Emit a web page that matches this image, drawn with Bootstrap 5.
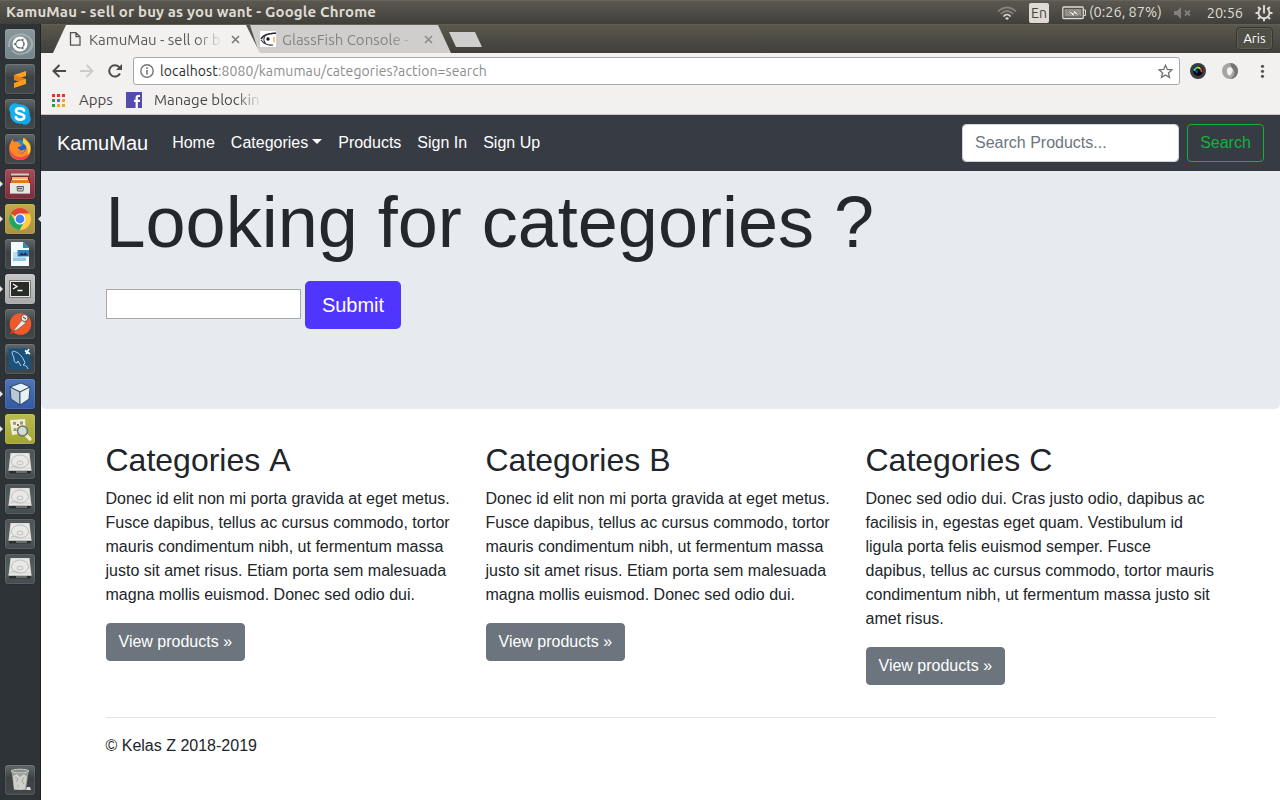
<!DOCTYPE html>
<html lang="en">
<head>
<meta charset="utf-8">
<meta name="viewport" content="width=device-width, initial-scale=1">
<title>KamuMau - sell or buy as you want</title>
<link rel="stylesheet" href="https://cdn.jsdelivr.net/npm/bootstrap@5.3.0/dist/css/bootstrap.min.css">
<style>
body{font-family:"Liberation Sans",Arial,sans-serif;color:#212529;background:#fff}
svg{display:block;flex:none}
.desktop{height:800px;width:1280px}
.ui{font-family:Ubuntu,"Noto Sans",sans-serif;white-space:nowrap}
.panel{height:24px;background:linear-gradient(#5b5850,#403f3a);border-top:1px solid #65635a;color:#dfdbd2;font-size:14.5px;line-height:22px;padding:0 7px 0 6px}
.panel .title{font-weight:700;font-size:15px;letter-spacing:.16px;margin-top:-2px}
.panel .reading{margin-top:-2px}
.lang{width:20px;height:20px;background:#dfdbd2;color:#45433e;font-size:14px;line-height:20px;border-radius:2px;text-align:center;margin:0 13px 0 12px}
.launcher{width:41px;background:#2d3336;border-right:1px solid #212425;padding:5px 0 5px 5px;gap:5px}
.tile{width:30px;height:30px;border-radius:3px;background:linear-gradient(#60676a,#3c4244 45%,#41474a);box-shadow:inset 0 0 0 1px #ffffff1c,0 0 1px #111}
.tile.running::before{content:"";position:absolute;left:-5px;top:12px;border:3px solid transparent;border-left-color:#e6e6e6;border-right:0}
.tile.focused::after{content:"";position:absolute;right:-6px;top:12px;border:3px solid transparent;border-right-color:#e6e6e6;border-left:0}
.t-dash{background:linear-gradient(#8a969a,#76858a)}
.t-files{background:linear-gradient(#a34c5a,#7c2c3a)}
.t-chrome{background:linear-gradient(#c1a94b,#a89143)}
.t-term{background:linear-gradient(#c5c5c5,#aaa)}
.t-cube{background:linear-gradient(#4f75b8,#3259a2)}
.t-view{background:linear-gradient(#b9bb4f,#a2a630)}
.t-disk{background:linear-gradient(#4d5456,#565d60 60%,#434a4d)}
.strip{height:29px;background:linear-gradient(#5a584e,#403f3a);border-top:1px solid #626054;padding-left:12px}
.tab{height:28px;font-size:15px;line-height:27px;color:#5a5858}
.tab-on{width:207px;background:#f2f1f0;clip-path:polygon(0 100%,13px 0,193px 0,100% 100%);padding-left:16px;z-index:1}
.tab-off{width:201px;margin-left:-10px;background:#d0cecc;color:#858382;clip-path:polygon(0 0,188px 0,100% 100%,9px 100%);padding-left:10px}
.fade-r{-webkit-mask-image:linear-gradient(90deg,#000 calc(100% - 28px),transparent);mask-image:linear-gradient(90deg,#000 calc(100% - 28px),transparent)}
.newtab{width:33px;height:15px;background:#d0cecc;clip-path:polygon(0 0,26px 0,100% 100%,7px 100%);margin:7px 0 0 -2px}
.who{margin:2px 7px 0 0;width:37px;height:23px;border:1px solid #37362f;border-radius:4px;background:#504f47;color:#fff;font-size:13px;line-height:21px;text-align:center;box-shadow:inset 0 0 0 1px #5f5e56}
.tools{height:35px;background:#f2f1f0;padding:4px 11px 3px 11px}
.omni{width:1047px;height:28px;border:1px solid #aaa8a6;border-radius:3px;background:#fff;color:#8d8d8d;font-size:14px;letter-spacing:.1px;line-height:25px;padding:0 6px 0 6px}
.marks{height:27px;background:#f2f1f0;border-bottom:1px solid #c8c6c4;color:#4a4848;font-size:15px;line-height:22px;padding:0 0 2px 11px}
.site{height:56px;background:#373b43;padding:0 16px}
.site .navbar-brand{color:#fff;font-size:20px;margin-right:16px}
.site .nav-link{color:#fff;padding:8px}
.site .dropdown-toggle::after{margin-left:4px;border-width:5px 5px 0}
.site .form-control{width:217px;height:38px;border-radius:4px;border-color:#ced4da}
.site .form-control::placeholder{color:#6c757d}
.site .btn{--bs-btn-color:#12b23e;--bs-btn-border-color:#12b23e;border-radius:4px;width:77px;padding:6px 0}
.hero{height:238px;background:#e7eaef;border-radius:0 0 5px 5px;padding-top:8px}
.container,.row{--bs-gutter-x:30px}
.hero h1{font-size:72px;line-height:86.4px;font-weight:300;color:#24272c;margin-bottom:15.6px}
.query{width:195px;height:30px;border:1px solid #a9a9a9;background:#fff;margin-bottom:2px}
.send{background:#5035ff;color:#fff;width:96px;height:48px;font-size:20px;border-radius:5px;padding:0 0 0 1px}
.topic h2{font-size:32px;font-weight:500;line-height:38.4px;font-kerning:none}
.topic .btn{border-radius:4px;background:#6c757d;border-color:#6c757d}
.rule{border-top:1px solid #e3e3e4;opacity:1;color:inherit}
</style>
</head>
<body>
<div class="desktop d-flex flex-column overflow-hidden">
<header class="panel ui d-flex align-items-center">
  <span class="title">KamuMau - sell or buy as you want - Google Chrome</span>
  <div class="ms-auto d-flex align-items-center">
    <svg width="20" height="16" viewBox="0 0 20 16" fill="none" stroke-width="1.7"><path d="M1 6.5Q10-1.5 19 6.5M3.7 9Q10 3 16.300 9" stroke="#85827a"/><path d="M6.400 11.500Q10 7.500 13.600 11.500" stroke="#dfdbd2"/><path d="M8 13.200Q10 11.500 12 13.200L10 15z" fill="#dfdbd2"/></svg>
    <span class="lang">En</span>
    <svg width="24" height="14" viewBox="0 0 24 14"><rect x=".8" y="1" width="20.500" height="11.500" rx="1" fill="none" stroke="#dfdbd2" stroke-width="1.300"/><path d="M22 4h1.500v5.500H22" fill="none" stroke="#dfdbd2"/><path d="M2.500 3h17v7.500h-17z" fill="#96938b"/><path d="M5 4l6.500 3V3.500L18 10l-6-2.500V11z" fill="#f2eee6" stroke="#55534c" stroke-width=".5"/></svg>
    <span class="reading" style="margin-left:3px">(0:26, 87%)</span>
    <svg style="margin-left:12px" width="18" height="14" viewBox="0 0 18 14"><path d="M0 5h3l4-4v12L3 9H0z" fill="#84817a"/><path d="M11 4.500l5 5m0-5l-5 5" stroke="#84817a" stroke-width="1.800"/></svg>
    <span class="reading" style="margin:0 12px 0 15px">20:56</span>
    <svg width="18" height="18" viewBox="0 0 18 18" fill="none" stroke="#dfdbd2"><path d="M6 4.200a5.500 5.500 0 1 0 6 0" stroke-width="1.900"/><path d="M9 1v8.500" stroke-width="1.900"/><path d="M9 14.500V17.300M14.500 9H17.500M.5 9h3M13 13l2 2M5 13l-2 2M13 5l2-2M5 5L3 3" stroke-width="2.100"/></svg>
  </div>
</header>
<div class="d-flex flex-grow-1" style="min-height:0">
<aside class="launcher d-flex flex-column flex-shrink-0">
  <div class="tile t-dash"><svg width="30" height="30" viewBox="0 0 30 30" fill="none"><path d="M4 18C3 7 15 3 22 7s7 13-1 17" stroke="#a3afb3" stroke-width="2"/><path d="M7 21c6 8 18 3 19-5" stroke="#9ba8ac" stroke-width="2"/><circle cx="15" cy="15" r="7.500" fill="#fff"/><circle cx="15" cy="15" r="4" stroke="#56646a" stroke-width="1.400"/><g fill="#56646a" stroke="#fff" stroke-width=".7"><circle cx="10.300" cy="15" r="1.600"/><circle cx="17.400" cy="11" r="1.600"/><circle cx="17.400" cy="19" r="1.600"/></g></svg></div>
  <div class="tile"><svg width="30" height="30" viewBox="0 0 30 30"><path d="M9 11l12-4v5L9 16z" fill="#ffa126"/><path d="M9 11l12 4v5L9 16z" fill="#e87e12"/><path d="M9 19l12-4v5L9 24z" fill="#ff9c1e"/></svg></div>
  <div class="tile"><svg width="30" height="30" viewBox="0 0 30 30"><circle cx="15" cy="15" r="9.800" fill="#12b0ef"/><circle cx="10" cy="10" r="5.800" fill="#12b0ef"/><circle cx="20" cy="20" r="5.800" fill="#12a7e8"/><path d="M19 11.500C17.500 8.500 11 8.800 11 12c0 3.800 8.300 2 8.300 5.800 0 3.600-7 3.700-8.500.4" fill="none" stroke="#fff" stroke-width="2.700" stroke-linecap="round"/></svg></div>
  <div class="tile"><svg width="30" height="30" viewBox="0 0 30 30"><circle cx="15" cy="15.500" r="9.500" fill="#2b5ec4"/><path d="M12 8c3-4 8-1 10 3-3-1-5 0-6 1z" fill="#1c8bdf"/><path d="M4.500 11l3-6 1.500 3c2-1 4 0 6 1-1 1 0 2 2 2-1 2-4 1-4 3 1 3 5 3 7 1 0 4-5 5-8 3 5 4 11-1 9-8l-3-5 2-1 5 6c3 8-2 16-10 16S3 20 4.500 11z" fill="#ff8a22"/><path d="M4.500 11c0 6 3.500 12 10.500 12 5 0 8-2 10-5-1 6-5 8-10 8S3 21 4.500 11z" fill="#fb3f52"/><path d="M18 4l5 4c3 4 3 10 0 13 0-6-1-9-5-12z" fill="#ffd43c"/></svg></div>
  <div class="tile t-files running position-relative"><svg width="30" height="30" viewBox="0 0 30 30"><path d="M6 5h18l1 10H5z" fill="#6c3028"/><path d="M6 4.500h18v2H6z" fill="#d4cbc4"/><path d="M7 8h16v3H7z" fill="#ffb05d"/><path d="M6 11h18v4H6z" fill="#e77527"/><path d="M8 10l14 .1v1H8z" fill="#fff0d7"/><path d="M5 14h20v11H5z" fill="#e6e6e3"/><path d="M5 24h20v1H5z" fill="#aaa"/><path d="M12 17.500h6.500l-.5 4.500h-5.500z" fill="#e4e4e1" stroke="#595959"/><path d="M13 19.500h4" stroke="#555" stroke-width="1.500"/></svg></div>
  <div class="tile t-chrome running focused position-relative"><svg width="30" height="30" viewBox="0 0 30 30"><circle cx="15" cy="15" r="11" fill="#ffce44"/><path d="M15 15L5.500 9.500A11 11 0 0 1 24.500 9.500H15z" fill="#e24436"/><path d="M5.500 9.500A11 11 0 0 0 14.500 26L19.500 17.500 15 15 10.500 17.500z" fill="#21a464"/><circle cx="15" cy="15" r="5.500" fill="#fff"/><circle cx="15" cy="15" r="4.400" fill="#3e83ed"/></svg></div>
  <div class="tile"><svg width="30" height="30" viewBox="0 0 30 30"><path d="M6 3h12l6 6v18H6z" fill="#f4f9fb"/><path d="M18 3l6 6h-6z" fill="#258bc2"/><path d="M8 13h9v5H8z" fill="#bcdff0"/><path d="M8 18.500h13v3.500H8z" fill="#8fcbe8"/><path d="M12.500 11H24v6.500H12.500z" fill="#2f85bd"/><path d="M13.500 16.500l3-3 2 1.500 2-2 2.500 3.500z" fill="#143a54"/></svg></div>
  <div class="tile t-term running position-relative"><svg width="30" height="30" viewBox="0 0 30 30"><path d="M4.500 6.500h21v17h-21z" fill="#e7e7e4" stroke="#777"/><path d="M6 8h18v14H6z" fill="#292d2a"/><path d="M8 10l4 2.500L8 15M12.500 16.500h5" fill="none" stroke="#fff" stroke-width="1.300"/></svg></div>
  <div class="tile"><svg width="30" height="30" viewBox="0 0 30 30"><circle cx="15.500" cy="15" r="10.800" fill="#f0592c"/><path d="M5 25l2-5 3 4z" fill="#d83b14"/><path d="M8 22L17 11l4 3-9 7z" fill="#eee6df" stroke="#8b5d4a" stroke-width=".8"/><circle cx="19.500" cy="9" r="3.500" fill="#e8e7e3" stroke="#534742" stroke-width=".8"/><path d="M18 8l3 2" stroke="#333"/></svg></div>
  <div class="tile"><svg width="30" height="30" viewBox="0 0 30 30"><path d="M3.500 4.500h22v21h-22z" fill="#18527d"/><path d="M23 25c-1-3-3-4-5-4l2-2c-2-6-6-10-9-11-2-1-3-1-4 0 0 3 2 4 2 7 0 2 1 4 3 4l1-2 3 5" fill="none" stroke="#cbdde7" stroke-width=".9"/><path d="M20 6.500l5 3.500M24 5l-3 5" fill="none" stroke="#fff" stroke-width="1.600"/></svg></div>
  <div class="tile t-cube running position-relative"><svg width="30" height="30" viewBox="0 0 30 30" stroke="#1d3154" stroke-width=".8" stroke-linejoin="round"><path d="M5 8l11-4 9 4-10 5z" fill="#e4f3f8"/><path d="M5 8l10 5v13L6 20z" fill="#b7c9d5"/><path d="M25 8l-10 5v13l9-6z" fill="#e6f1f6"/></svg></div>
  <div class="tile t-view running position-relative"><svg width="30" height="30" viewBox="0 0 30 30"><path d="M5 6l15-1 1 14-14 2z" fill="#eeeedd"/><path d="M8 8l3-.3v3H8zm7-.5h3v3h-3zm-6.500 7l3-.5v3h-3z" fill="#8fa06b"/><path d="M12 10h2v2h-2z" fill="#c85b28"/><path d="M21 21l4 4" stroke="#edece1" stroke-width="3.200" stroke-linecap="round"/><circle cx="17.500" cy="17" r="5" fill="#cfd9cf" fill-opacity=".9" stroke="#6a726a" stroke-width="1.500"/></svg></div>
  <div class="tile t-disk"><svg width="30" height="30" viewBox="0 0 30 30"><g id="disk"><path d="M3.500 20h23l-1 4.500h-21z" fill="#2b2e2e"/><path d="M11 23h11" stroke="#a5a7a5"/><path d="M5.500 4h19l2 17.500h-23z" fill="#dededc"/><path d="M6.500 5h17l1.500 13H5z" fill="#e8e8e6"/><g fill="none" stroke="#c0c1bf"><ellipse cx="15" cy="12.500" rx="8.500" ry="6.500"/><ellipse cx="15" cy="14" rx="3" ry="2"/><path d="M6 18l5-1 3 2"/></g><path d="M3.500 21h23" stroke="#f4f4f2"/></g></svg></div>
  <div class="tile t-disk"><svg width="30" height="30"><use href="#disk"/></svg></div>
  <div class="tile t-disk"><svg width="30" height="30"><use href="#disk"/></svg></div>
  <div class="tile t-disk"><svg width="30" height="30"><use href="#disk"/></svg></div>
  <div class="tile mt-auto"><svg width="30" height="30" viewBox="0 0 30 30"><path d="M6.500 6h17l-2.500 19H9z" fill="#9b9d98"/><path d="M8 11l4-2 3 3 4-3 3 3-2 12-4 1-7-1z" fill="#cfd0cc"/><path d="M10 12l3 2-2 3m8-5l-2 4 2 3m-7 1l2 2" fill="none" stroke="#9fa29d"/><ellipse cx="15" cy="6" rx="9" ry="1.800" fill="#8a8d89" stroke="#cacbc7"/><path d="M21 25l1-3 3 0 1 3z" fill="#dcddd7"/></svg></div>
</aside>
<div class="flex-grow-1 d-flex flex-column" style="min-width:0">
  <div class="strip ui d-flex">
    <div class="tab tab-on d-flex align-items-center position-relative">
      <svg width="12" height="14" viewBox="0 0 12 14"><path d="M1.500.700h5.500l4 4v8.500h-9.500zM7 .700v4h4" fill="none" stroke="#555" stroke-width="1.300"/></svg>
      <span class="fade-r" style="width:134px;margin-left:8px">KamuMau - sell or b</span>
      <svg style="margin-left:8px" width="9" height="9" viewBox="0 0 9 9"><path d="M1 1l7 7M8 1L1 8" stroke="#777" stroke-width="1.500"/></svg>
    </div>
    <div class="tab tab-off d-flex align-items-center">
      <svg width="16" height="16" viewBox="0 0 16 16"><path d="M0 0h16v16H0z" fill="#fff"/><path d="M1 8C4 3 9 3 16 2" fill="none" stroke="#20203a" stroke-width="1.500"/><path d="M1 9c3 4 8 5.500 12 5M5 5c-2 3-1 6 1 8" fill="none" stroke="#34343f" stroke-width="1.100"/><circle cx="8" cy="8" r="1.700" fill="#111"/><path d="M14.500 6q-1.500 3 0 5" fill="none" stroke="#e9a94f" stroke-width="1.300"/></svg>
      <span class="fade-r" style="width:136px;margin-left:6px">GlassFish Console -</span>
      <svg style="margin-left:6px" width="9" height="9" viewBox="0 0 9 9"><path d="M1 1l7 7M8 1L1 8" stroke="#8b8988" stroke-width="1.500"/></svg>
    </div>
    <div class="newtab"></div>
    <div class="who ms-auto">Aris</div>
  </div>
  <div class="tools ui d-flex align-items-center">
    <svg width="14" height="14" viewBox="0 0 14 14" fill="none" stroke="#4b4b4b" stroke-width="2"><path d="M14 7H1.500M7.500 1L1.500 7l6 6"/></svg>
    <svg style="margin-left:14px" width="14" height="14" viewBox="0 0 14 14" fill="none" stroke="#ceccca" stroke-width="2"><path d="M0 7h12.500M6.500 1l6 6-6 6"/></svg>
    <svg style="margin:0 11px 0 14px" width="14" height="14" viewBox="0 0 14 14"><path d="M12 9.500A5.700 5.700 0 1 1 11.500 3.500" fill="none" stroke="#4b4b4b" stroke-width="2"/><path d="M14 0v6H8z" fill="#4b4b4b"/></svg>
    <div class="omni d-flex align-items-center">
      <svg width="14" height="14" viewBox="0 0 14 14"><circle cx="7" cy="7" r="6.200" fill="none" stroke="#757575" stroke-width="1.400"/><path d="M6.200 6h1.600v4.500H6.200zm0-2.700h1.600v1.600H6.200z" fill="#757575"/></svg>
      <span style="margin-left:6px"><span style="color:#2e2e2e">localhost</span>:8080/kamumau/categories?action=search</span>
      <svg class="ms-auto" width="15" height="15" viewBox="0 0 15 15"><path d="M7.500 1.300l1.800 4.200 4.600.4-3.500 3 1.100 4.500-4-2.400-4 2.400 1.100-4.500-3.500-3 4.600-.4z" fill="none" stroke="#6f6f6f" stroke-width="1.300"/></svg>
    </div>
    <svg style="margin-left:10px" width="16" height="16" viewBox="0 0 16 16"><circle cx="8" cy="8" r="8" fill="#3b3b43"/><circle cx="8" cy="8" r="4.800" fill="#08090b"/><g fill="none" stroke-width="2"><path d="M4.500 8A3.500 3.500 0 0 1 7 4.600" stroke="#2ed3ae"/><path d="M7 4.600A3.500 3.500 0 0 1 10.500 6" stroke="#b2d231"/><path d="M10.500 6A3.500 3.500 0 0 1 11.400 9" stroke="#e52f5c"/></g><path d="M5 8l3-1-1 4z" fill="#2447d5"/></svg>
    <svg style="margin-left:16px" width="16" height="16" viewBox="0 0 16 16"><circle cx="8" cy="8" r="8" fill="#a5a5a5"/><path d="M8 0a8 8 0 0 1 0 16c5-2 6-8 2-11z" fill="#747474"/><path d="M5.500 5c4-2 6 1 5 4-1 2-2 2-2 4-4-1-4-5-3-8z" fill="#f2f1f0"/></svg>
    <svg class="ms-auto" width="14" height="14" viewBox="0 0 14 14" fill="#555"><circle cx="7.500" cy="2.300" r="1.600"/><circle cx="7.500" cy="7.300" r="1.600"/><circle cx="7.500" cy="12.300" r="1.600"/></svg>
  </div>
  <div class="marks ui d-flex align-items-center">
    <svg width="13" height="13" viewBox="0 0 13 13"><path d="M0 0h3v3H0zm5 0h3v3H5zm5 0h3v3h-3z" fill="#ee3124"/><path d="M0 5h3v3H0zm0 5h3v3H0z" fill="#17a34a"/><path d="M5 5h3v3H5z" fill="#3577ee"/><path d="M10 5h3v3h-3zm-5 5h3v3H5zm5 0h3v3h-3z" fill="#f4a71c"/></svg>
    <span style="margin-left:14px;width:36px">Apps</span>
    <svg style="margin-left:11px" width="16" height="16" viewBox="0 0 16 16"><path d="M0 0h16v16H0z" fill="#554aad"/><path d="M14 4h-2q-1.300 0-1.300 1.500V16M8 8.800h6" fill="none" stroke="#fff" stroke-width="2.200"/></svg>
    <span class="fade-r" style="margin-left:12px;width:109px">Manage blockin</span>
  </div>
  <nav class="site navbar navbar-expand flex-shrink-0">
    <a class="navbar-brand" href="#">KamuMau</a>
    <ul class="navbar-nav me-auto">
      <li class="nav-item"><a class="nav-link" href="#">Home</a></li>
      <li class="nav-item dropdown"><a class="nav-link dropdown-toggle" href="#" data-bs-toggle="dropdown">Categories</a></li>
      <li class="nav-item"><a class="nav-link" href="#">Products</a></li>
      <li class="nav-item"><a class="nav-link" href="#">Sign In</a></li>
      <li class="nav-item"><a class="nav-link" href="#">Sign Up</a></li>
    </ul>
    <form class="d-flex gap-2"><input class="form-control" type="text" placeholder="Search Products..." aria-label="Search"><button class="btn btn-outline-success" type="button">Search</button></form>
  </nav>
  <main>
    <section class="hero"><div class="container">
      <h1>Looking for categories ?</h1>
      <form class="d-flex align-items-center gap-1"><input class="query" type="text" aria-label="Category"><button class="btn send" type="button">Submit</button></form>
    </div></section>
    <div class="container">
      <div class="row" style="padding-top:32px">
        <div class="col-4 topic"><h2>Categories A</h2><p>Donec id elit non mi porta gravida at eget metus. Fusce dapibus, tellus ac cursus commodo, tortor mauris condimentum nibh, ut fermentum massa justo sit amet risus. Etiam porta sem malesuada magna mollis euismod. Donec sed odio dui.</p><p><a class="btn btn-secondary" href="#">View products »</a></p></div>
        <div class="col-4 topic"><h2>Categories B</h2><p>Donec id elit non mi porta gravida at eget metus. Fusce dapibus, tellus ac cursus commodo, tortor mauris condimentum nibh, ut fermentum massa justo sit amet risus. Etiam porta sem malesuada magna mollis euismod. Donec sed odio dui.</p><p><a class="btn btn-secondary" href="#">View products »</a></p></div>
        <div class="col-4 topic"><h2>Categories C</h2><p>Donec sed odio dui. Cras justo odio, dapibus ac facilisis in, egestas eget quam. Vestibulum id ligula porta felis euismod semper. Fusce dapibus, tellus ac cursus commodo, tortor mauris condimentum nibh, ut fermentum massa justo sit amet risus.</p><p><a class="btn btn-secondary" href="#">View products »</a></p></div>
      </div>
      <hr class="rule">
      <footer>© Kelas Z 2018-2019</footer>
    </div>
  </main>
</div>
</div>
</div>
<script src="https://cdn.jsdelivr.net/npm/bootstrap@5.3.0/dist/js/bootstrap.bundle.min.js"></script>
</body>
</html>
